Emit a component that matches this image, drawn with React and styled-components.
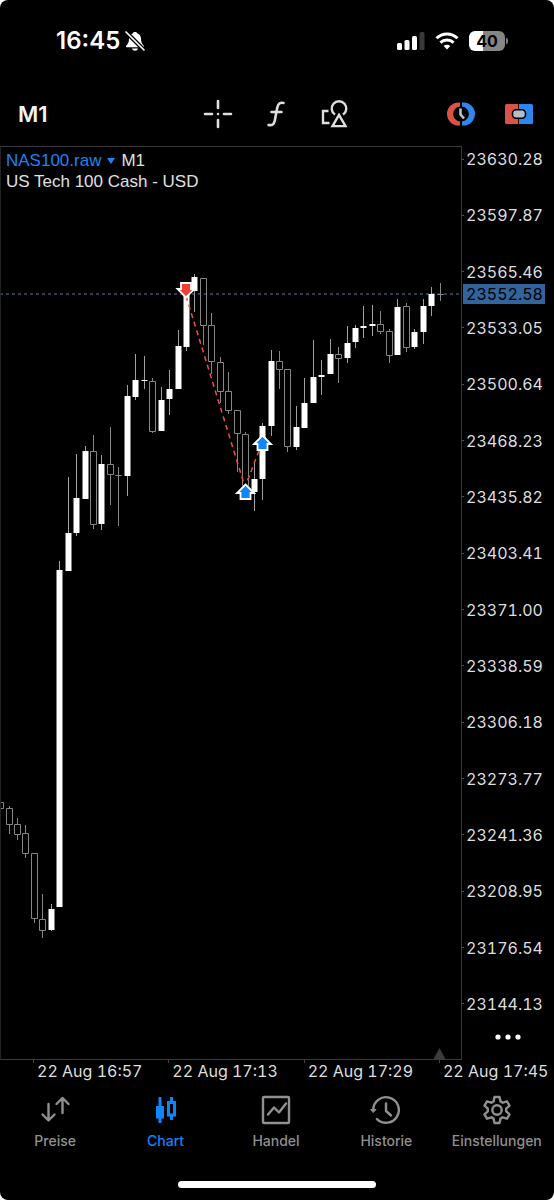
import styled, { createGlobalStyle } from "styled-components";

const GlobalStyle = createGlobalStyle`
	* {
		box-sizing: border-box;
	}
	body {
		margin: 0;
		background: #fff;
	}
	button {
		border: 0;
		padding: 0;
		background: none;
		color: inherit;
		font: inherit;
		cursor: pointer;
	}
`;

const Screen = styled.main`
	display: flex;
	flex-direction: column;
	min-height: 100vh;
	overflow: hidden;
	border-radius: 8px;
	background: #000;
	color: #dedede;
	font-family: Inter, "Liberation Sans", sans-serif;
`;

const StatusBar = styled.div`
	display: flex;
	align-items: center;
	justify-content: space-between;
	height: 82px;
	padding: 0 46px 0 56px;
	color: #fff;
`;

const StatusGroup = styled.div`
	display: flex;
	align-items: center;
	gap: ${(props) => props.$gap};
`;

const Clock = styled.time`
	font-size: 24px;
	font-weight: 600;
	line-height: 32px;
`;

const Battery = styled.div`
	display: flex;
	align-items: center;
	gap: 1px;
	&:after {
		content: "";
		width: 2px;
		height: 6px;
		border-radius: 0 2px 2px 0;
		background: #808080;
	}
`;

const BatteryBody = styled.span`
	width: 36px;
	height: 20px;
	border-radius: 6px;
	background: linear-gradient(90deg, #fff 40%, #858585 40%);
	color: #000;
	font-size: 16px;
	font-weight: 700;
	line-height: 20px;
	text-align: center;
`;

const Toolbar = styled.header`
	display: grid;
	grid-template-columns: 1fr auto 1fr;
	align-items: center;
	height: 64px;
	padding: 0 20px 0 18px;
`;

const Timeframe = styled.button`
	justify-self: start;
	color: #f2f2f2;
	font-size: 22px;
	font-weight: 600;
	line-height: 32px;
`;

const Tools = styled.div`
	display: flex;
	align-items: center;
	justify-self: ${(props) => props.$align};
	gap: 28px;
`;

const IconButton = styled.button`
	display: flex;
	align-items: center;
	justify-content: center;
	width: 30px;
	height: 32px;
`;

const ChartArea = styled.section`
	display: grid;
	grid-template-columns: 1fr 92px;
`;

const Plot = styled.div`
	position: relative;
	border: 1px solid #3a3a3a;
	border-left-color: #222;
`;

const PlotSvg = styled.svg`
	display: block;
	width: 100%;
	height: 912px;
`;

const Legend = styled.div`
	position: absolute;
	top: 3px;
	left: 5px;
	color: #e0e0e0;
	font-family: "Liberation Sans", Arial, sans-serif;
	font-size: 17px;
	line-height: 21px;
`;

const LegendRow = styled.div`
	display: flex;
	height: 21px;
`;

const SymbolButton = styled.button`
	display: flex;
	align-items: center;
	gap: 6px;
	margin-right: 6px;
	color: #1a84f5;
`;

const Caret = styled.span`
	border: 4px solid transparent;
	border-top: 6px solid #1a84f5;
	border-bottom: 0;
`;

const PriceAxis = styled.div`
	position: relative;
	padding-top: 3px;
	font-size: 16px;
	font-variant-numeric: tabular-nums;
	line-height: 20px;
`;

const PriceList = styled.ul`
	display: flex;
	flex-direction: column;
	justify-content: space-between;
	height: 865px;
	margin: 0;
	padding: 0;
	list-style: none;
`;

const Price = styled.li`
	display: flex;
	align-items: center;
	gap: 2px;
	&:before {
		content: "";
		width: 2px;
		height: 1px;
		background: #555;
	}
`;

const CurrentPrice = styled.output`
	position: absolute;
	top: 138px;
	left: 1px;
	width: 82px;
	padding-left: 3px;
	background: #32639a;
	color: #000;
`;

const MoreButton = styled.button`
	display: flex;
	align-items: center;
	justify-content: center;
	width: 100%;
	height: 46px;
`;

const TimeAxis = styled.div`
	display: grid;
	grid-template-columns: repeat(3, 1fr) 115px;
	padding-left: 33px;
`;

const TimeLabel = styled.time`
	padding: 1px 0 1px 4px;
	font-size: 16px;
	font-variant-numeric: tabular-nums;
	line-height: 20px;
	white-space: nowrap;
	background: linear-gradient(#444, #444) 0 0 / 1px 3px no-repeat;
`;

const TabBar = styled.nav`
	display: grid;
	grid-template-columns: repeat(5, minmax(0, 1fr));
	padding: 12px 2px 0 0;
`;

const Tab = styled.a`
	display: flex;
	flex-direction: column;
	align-items: center;
	gap: 5px;
	color: ${(props) => (props.$active ? "#0f84fb" : "#909090")};
	font-size: 14px;
	font-weight: 500;
	line-height: 20px;
	text-decoration: none;
`;

const HomeIndicator = styled.div`
	width: 198px;
	height: 7px;
	margin: 30px auto 0;
	border-radius: 4px;
	background: #fff;
`;

const prices = [
	"23630.28",
	"23597.87",
	"23565.46",
	"23533.05",
	"23500.64",
	"23468.23",
	"23435.82",
	"23403.41",
	"23371.00",
	"23338.59",
	"23306.18",
	"23273.77",
	"23241.36",
	"23208.95",
	"23176.54",
	"23144.13",
];

const times = ["22 Aug 16:57", "22 Aug 17:13", "22 Aug 17:29", "22 Aug 17:45"];

// wick top, body top, body bottom, wick bottom, falling
const candles = [
	[802, 802, 808, 808, 1],
	[806, 808, 824, 834, 1],
	[818, 824, 834, 840, 1],
	[825, 833, 853, 858, 1],
	[853, 853, 918, 923, 1],
	[894, 919, 930, 938, 1],
	[904, 909, 930, 931],
	[561, 570, 907, 907],
	[477, 533, 571, 571],
	[454, 498, 533, 536],
	[446, 451, 499, 499],
	[435, 451, 524, 529, 1],
	[455, 464, 524, 530],
	[427, 464, 474, 505, 1],
	[467, 475, 475, 526, 1],
	[385, 396, 476, 496],
	[354, 380, 397, 400],
	[356, 380, 381, 389],
	[378, 381, 431, 433, 1],
	[387, 400, 431, 431],
	[370, 389, 399, 415],
	[330, 346, 389, 389],
	[290, 290, 347, 351],
	[274, 277, 291, 312],
	[278, 278, 325, 345, 1],
	[313, 325, 361, 374, 1],
	[357, 362, 391, 403, 1],
	[372, 391, 410, 414, 1],
	[410, 410, 433, 472, 1],
	[432, 434, 485, 487, 1],
	[462, 479, 492, 511],
	[423, 426, 479, 500],
	[350, 361, 426, 436],
	[351, 361, 369, 389, 1],
	[369, 369, 446, 452, 1],
	[406, 427, 447, 450],
	[378, 403, 428, 428],
	[340, 377, 403, 403],
	[360, 375, 377, 395],
	[339, 354, 374, 374],
	[347, 354, 358, 383, 1],
	[326, 343, 358, 363],
	[325, 328, 342, 348],
	[306, 326, 328, 338],
	[305, 324, 326, 336],
	[311, 324, 331, 334, 1],
	[329, 331, 355, 363, 1],
	[299, 307, 355, 355],
	[303, 306, 347, 352, 1],
	[329, 332, 347, 349],
	[299, 306, 332, 344],
	[287, 294, 306, 316],
	[283, 294, 294, 301, 1],
];

function Candle({ index, data }) {
	const [high, top, bottom, low, falling] = data;
	const x = Math.floor(0.6 + index * 8.45) + 0.5;
	if (falling) {
		return (
			<path
				d={`M${x} ${high}V${top}M${x} ${bottom}V${low}M${x - 3} ${top + 0.5}H${x + 3}V${bottom + 0.5}H${x - 3}Z`}
				fill="none"
				stroke="#868686"
			/>
		);
	}
	return (
		<g>
			<path d={`M${x} ${high}V${low}`} stroke="#a0a0a0" />
			<rect x={x - 3} y={top} width="6" height={bottom - top} fill="#fff" />
		</g>
	);
}

function Marker({ x, y, sell }) {
	return (
		<path
			d="M0 -7.500L8.500 1H5V7H-5V1H-8.500Z"
			transform={`translate(${x} ${y})${sell ? " rotate(180)" : ""}`}
			fill={sell ? "#ee3f34" : "#1185fb"}
			stroke="#fff"
			strokeWidth="1.800"
		/>
	);
}

function Chart() {
	return (
		<PlotSvg viewBox="1 147 460 912" preserveAspectRatio="xMaxYMin meet" role="img" aria-label="NAS100 M1">
			<path d="M0 294H462" stroke="#4f80ad" strokeDasharray="3 3" strokeWidth="1.200" />
			{candles.map((data, i) => (
				<Candle key={i} index={i} data={data} />
			))}
			<path d="M186 296L245 487L262 443" fill="none" stroke="#ee4e4e" strokeWidth="1.500" strokeDasharray="5 4" />
			<Marker x={186} y={290} sell />
			<Marker x={245.5} y={492} />
			<Marker x={262.5} y={443} />
			<path d="M439.500 1048L446 1060H433Z" fill="#3c3c3c" />
		</PlotSvg>
	);
}

function BellOff() {
	return (
		<svg width="22" height="22" viewBox="0 0 22 22" fill="#fff">
			<path d="M11 2C9.500 2 9 2.700 8.600 3.400 6.200 4.300 5 6.200 5 8.700c0 3.600-1 5-2.600 6.700-.8.900-.5 1.900.7 1.900h15.800c1.200 0 1.500-1 .7-1.900C18 13.700 17 12.300 17 8.700c0-2.500-1.200-4.400-3.600-5.300C13 2.700 12.500 2 11 2zM8 18.600h6c-.5 1.500-1.500 2.200-3 2.200s-2.500-.7-3-2.200z" />
			<path d="M1.500 1.500L20.500 20.500" stroke="#000" strokeWidth="4.200" />
			<path d="M2 2L20 20" stroke="#fff" strokeWidth="1.700" strokeLinecap="round" />
		</svg>
	);
}

function Signal() {
	return (
		<svg width="28" height="18" viewBox="0 0 28 18" fill="#fff">
			<rect x="0" y="11" width="5" height="7" rx="1.500" />
			<rect x="7.500" y="8" width="5" height="10" rx="1.500" />
			<rect x="15" y="4" width="5" height="14" rx="1.500" />
			<rect x="22.500" y="0" width="5" height="18" rx="1.500" fill="#3a3a3a" />
		</svg>
	);
}

function Wifi() {
	return (
		<svg width="24" height="18" viewBox="0 0 24 18" fill="none" stroke="#fff" strokeWidth="3">
			<path d="M1.500 6.300a15 15 0 0 1 21 0" />
			<path d="M5.400 10.600a9.500 9.500 0 0 1 13.200 0" />
			<path d="M12 17.500l-3.300-3.400a4.700 4.700 0 0 1 6.600 0z" fill="#fff" stroke="none" />
		</svg>
	);
}

const strokeProps = { fill: "none", stroke: "currentColor", strokeLinecap: "round", strokeLinejoin: "round" };

function Crosshair() {
	return (
		<svg width="30" height="30" viewBox="0 0 30 30" {...strokeProps} strokeWidth="2.600">
			<path d="M15 2v7M15 21v7M2 15h7M21 15h7M15 15h.01" />
		</svg>
	);
}

function FunctionIcon() {
	return (
		<svg width="30" height="30" viewBox="0 0 30 30" {...strokeProps} strokeWidth="2.600">
			<path d="M22.500 4c-3.500-.8-5.400.7-6.200 4.500l-2.500 13c-.7 3.800-2.700 5.200-6.300 4.500M10.500 13h10" />
		</svg>
	);
}

function Shapes() {
	return (
		<svg width="30" height="30" viewBox="0 0 30 30" fill="none" stroke="currentColor" strokeWidth="2.400">
			<path d="M9.500 12H4v12h6.500" />
			<path d="M16 15.600a7.300 7.300 0 1 1 8 0" />
			<path d="M20 15.800l6.500 11.300h-13z" />
		</svg>
	);
}

function TradeClock() {
	return (
		<svg width="30" height="26" viewBox="0 0 30 26" fill="none">
			<path d="M14 1.500h-1.500a11.500 11.500 0 0 0 0 23H14v-4a8.200 7.600 0 0 1 0-15z" fill="#d95347" />
			<path d="M16 1.500h1.500a11.500 11.500 0 0 1 0 23H16v-4a8.200 7.600 0 0 0 0-15z" fill="#2f86ee" />
			<path d="M14.500 7.500v6l3.500 4" stroke="#b7c4cb" strokeWidth="2.600" />
		</svg>
	);
}

function OneClick() {
	return (
		<svg width="30" height="22" viewBox="0 0 30 22">
			<path d="M2.500 1h11.700v20H2.500A1.500 1.500 0 0 1 1 19.500v-17A1.500 1.500 0 0 1 2.500 1z" fill="#d95347" />
			<path d="M15 1h12.500A1.500 1.500 0 0 1 29 2.500v17a1.500 1.500 0 0 1-1.500 1.500H15z" fill="#2f86ee" />
			<rect x="8.500" y="6.700" width="13" height="8.600" rx="3.500" fill="#b3bec8" stroke="#000" strokeWidth="1.600" />
		</svg>
	);
}

function Quotes() {
	return (
		<svg width="32" height="32" viewBox="0 0 32 32" {...strokeProps} strokeWidth="2.400">
			<path d="M9.500 10v16M3.500 20.500l6 6 6-6M23.500 19V4M17.500 10l6-6 6 6" />
		</svg>
	);
}

function Candles() {
	return (
		<svg width="32" height="32" viewBox="0 0 32 32" fill="none" stroke="currentColor" strokeWidth="3">
			<path d="M10 3v26" />
			<path d="M6 12h8v12.500H6z" fill="currentColor" stroke="none" />
			<path d="M21.500 3v5M21.500 21v5M18.500 8.500h6V21h-6z" />
		</svg>
	);
}

function Trade() {
	return (
		<svg width="32" height="32" viewBox="0 0 32 32" {...strokeProps} strokeWidth="2.400">
			<rect x="3" y="3" width="26" height="26" rx="1" />
			<path d="M8 20.500l6-7 5 5 7-9" />
		</svg>
	);
}

function History() {
	return (
		<svg width="32" height="32" viewBox="0 0 32 32" {...strokeProps} strokeWidth="2.400">
			<path d="M3.200 16A12.800 12.800 0 1 1 7 25.100M16 9.500V17l5 4.500" />
			<path d="M1 15.500h5l-2.500 2.800z" fill="currentColor" strokeWidth="1" />
		</svg>
	);
}

function Settings() {
	return (
		<svg width="32" height="32" viewBox="0 0 32 32" {...strokeProps} strokeWidth="2.400">
			<circle cx="16" cy="16" r="4.700" />
			<path d="M13.500 3h5l1 4.400 2.200 1.300L26 7.300l2.500 4.400-3.300 3v2.600l3.300 3-2.500 4.400-4.300-1.400-2.200 1.300-1 4.400h-5l-1-4.400-2.200-1.300L6 24.700l-2.500-4.400 3.300-3v-2.600l-3.300-3L6 7.300l4.300 1.400 2.200-1.300z" />
		</svg>
	);
}

const tabs = [
	{ label: "Preise", icon: Quotes },
	{ label: "Chart", icon: Candles, active: true },
	{ label: "Handel", icon: Trade },
	{ label: "Historie", icon: History },
	{ label: "Einstellungen", icon: Settings },
];

function App() {
	return (
		<Screen>
			<GlobalStyle />
			<StatusBar>
				<StatusGroup $gap="4px">
					<Clock>16:45</Clock>
					<BellOff />
				</StatusGroup>
				<StatusGroup $gap="10px">
					<Signal />
					<Wifi />
					<Battery>
						<BatteryBody>40</BatteryBody>
					</Battery>
				</StatusGroup>
			</StatusBar>
			<Toolbar>
				<Timeframe>M1</Timeframe>
				<Tools $align="center">
					<IconButton aria-label="Crosshair">
						<Crosshair />
					</IconButton>
					<IconButton aria-label="Indicators">
						<FunctionIcon />
					</IconButton>
					<IconButton aria-label="Objects">
						<Shapes />
					</IconButton>
				</Tools>
				<Tools $align="end">
					<IconButton aria-label="Pending order">
						<TradeClock />
					</IconButton>
					<IconButton aria-label="One click trading">
						<OneClick />
					</IconButton>
				</Tools>
			</Toolbar>
			<ChartArea>
				<Plot>
					<Chart />
					<Legend>
						<LegendRow>
							<SymbolButton>
								NAS100.raw
								<Caret />
							</SymbolButton>
							M1
						</LegendRow>
						<LegendRow>US Tech 100 Cash - USD</LegendRow>
					</Legend>
				</Plot>
				<PriceAxis>
					<PriceList>
						{prices.map((price) => (
							<Price key={price}>{price}</Price>
						))}
					</PriceList>
					<CurrentPrice>23552.58</CurrentPrice>
					<MoreButton aria-label="More">
						<svg width="26" height="6" viewBox="0 0 26 6" fill="#fff">
							<circle cx="3" cy="3" r="2.600" />
							<circle cx="13" cy="3" r="2.600" />
							<circle cx="23" cy="3" r="2.600" />
						</svg>
					</MoreButton>
				</PriceAxis>
			</ChartArea>
			<TimeAxis>
				{times.map((time) => (
					<TimeLabel key={time}>{time}</TimeLabel>
				))}
			</TimeAxis>
			<TabBar>
				{tabs.map(({ label, icon: Icon, active }) => (
					<Tab key={label} href="#" $active={active}>
						<Icon />
						{label}
					</Tab>
				))}
			</TabBar>
			<HomeIndicator />
		</Screen>
	);
}

export default App;
